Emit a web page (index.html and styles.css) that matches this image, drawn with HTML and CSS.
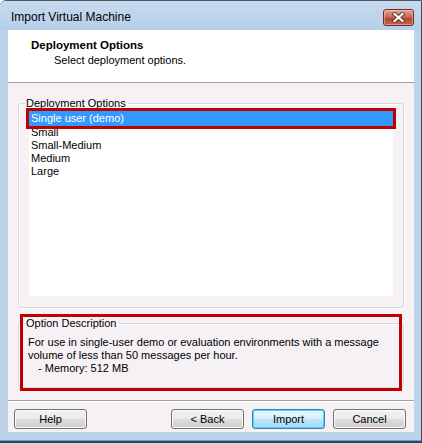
FILE: index.html
```html
<!DOCTYPE html>
<html lang="en">
<head>
    <meta charset="UTF-8">
    <meta name="viewport" content="width=device-width, initial-scale=1.0">
    <title>Import Virtual Machine</title>
    <link rel="stylesheet" href="styles.css">
</head>
<body>
    <div class="window">
        <div class="titlebar">
            <span class="title">Import Virtual Machine</span>
            <button class="close" aria-label="Close">
                <svg width="15" height="11" viewBox="0 0 15 11">
                    <path d="M3.5 2 L11.5 9 M11.5 2 L3.5 9" stroke="#5a3a36" stroke-width="4" stroke-linecap="square"/>
                    <path d="M3.5 2 L11.5 9 M11.5 2 L3.5 9" stroke="#fff" stroke-width="2.2" stroke-linecap="square"/>
                </svg>
            </button>
        </div>

        <div class="client">
            <div class="header">
                <div class="header-title">Deployment Options</div>
                <div class="header-sub">Select deployment options.</div>
            </div>

            <div class="content">
                <fieldset class="group options">
                    <legend>Deployment Options</legend>
                    <ul class="listbox">
                        <li class="selected">Single user (demo)</li>
                        <li>Small</li>
                        <li>Small-Medium</li>
                        <li>Medium</li>
                        <li>Large</li>
                    </ul>
                </fieldset>

                <div class="desc-wrap">
                    <fieldset class="group desc">
                        <legend>Option Description</legend>
                        <div class="desc-text">
                            <p>For use in single-user demo or evaluation environments with a message volume of less than 50 messages per hour.</p>
                            <p class="indent">- Memory: 512 MB</p>
                        </div>
                    </fieldset>
                    <div class="callout"></div>
                </div>
            </div>

            <div class="footer">
                <button class="btn">Help</button>
                <div class="spacer"></div>
                <button class="btn">&lt; Back</button>
                <button class="btn default">Import</button>
                <button class="btn">Cancel</button>
            </div>
        </div>
        <div class="frame-bottom"></div>
    </div>
</body>
</html>
```

FILE: styles.css
```css
body {
    margin: 0;
    font-family: "Liberation Sans", Arial, sans-serif;
    font-size: 11px;
    color: #000;
    background: #fff;
}
.window {
    width: 422px;
    height: 443px;
    box-sizing: border-box;
    background: #bcd3ea;
    border-top: 1px solid #4a5866;
    border-right: 1px solid #3d4c5c;
    border-top-left-radius: 6px;
    display: flex;
    flex-direction: column;
    overflow: hidden;
}
.titlebar {
    height: 29px;
    display: flex;
    align-items: center;
    background: linear-gradient(#c7dbef, #b5cee9);
    padding-left: 11px;
}
.title {
    font-size: 12px;
    color: #000;
    padding-top: 2px;
    flex: 1;
}
.close {
    width: 31px;
    height: 17px;
    margin: 3px 7px 0 0;
    padding: 0;
    border: 1px solid #6d2a23;
    border-radius: 3px;
    background: linear-gradient(#e4a394, #c9604d 50%, #b8412c 51%, #c9634f);
    box-shadow: inset 0 0 0 1px rgba(255, 255, 255, 0.35);
    display: flex;
    align-items: center;
    justify-content: center;
}
.client {
    margin: 0 7px 0 8px;
    height: 402px;
    background: #f5f1f5;
    display: flex;
    flex-direction: column;
}
.header {
    height: 53px;
    background: #fff;
    border-bottom: 1px solid #a0a0a0;
    box-sizing: border-box;
    padding: 9px 0 0 23px;
}
.header-title {
    font-weight: bold;
    font-size: 11.5px;
}
.header-sub {
    margin: 3px 0 0 23px;
}
.content {
    padding: 14px 10px 0 10px;
    flex: 1;
}
.group {
    margin: 0;
    border: 1px solid #d6d8de;
    border-radius: 3px;
    padding: 0;
    box-shadow: inset 1px 1px 0 #fff, 1px 1px 0 #fff;
}
.group legend {
    padding: 0 2px 0 1px;
    margin-left: 6px;
    line-height: 13px;
}
.options {
    height: 211px;
    box-sizing: border-box;
}
.listbox {
    list-style: none;
    margin: 1px 10px 0 10px;
    padding: 0;
    background: #fff;
    height: 185px;
}
.listbox li {
    height: 13px;
    line-height: 13px;
    padding-left: 2px;
}
.listbox li.selected {
    background: #3399ff;
    color: #fff;
    height: 15px;
    line-height: 15px;
    outline: 3px solid #c00000;
    outline-offset: 0;
}
.desc-wrap {
    position: relative;
    margin-top: 9px;
}
.desc {
    height: 71px;
    box-sizing: border-box;
}
.desc-text {
    padding: 6px 9px 0 9px;
}
.desc p {
    margin: 0;
    line-height: 13px;
}
.desc .indent {
    padding-left: 10px;
}
.callout {
    position: absolute;
    left: 2px;
    right: 2px;
    top: -3px;
    bottom: -3px;
    border: 3px solid #c00000;
}
.footer {
    border-top: 1px solid #a0a0a0;
    box-shadow: inset 0 1px 0 #fff;
    height: 32px;
    box-sizing: border-box;
    display: flex;
    align-items: flex-start;
    gap: 8px;
    padding: 8px 8px 0 6px;
}
.spacer {
    flex: 1;
}
.btn {
    width: 73px;
    height: 20px;
    font-family: "Liberation Sans", Arial, sans-serif;
    font-size: 11px;
    color: #000;
    border: 1px solid #707070;
    border-radius: 3px;
    background: linear-gradient(#f2f2f2 0%, #ebebeb 50%, #dddddd 51%, #cfcfcf 100%);
    box-shadow: inset 0 0 0 1px #fcfcfc;
    padding: 0;
}
.btn.default {
    border-color: #3c7fb1;
    background: linear-gradient(#eaf6fd 0%, #d9f0fc 50%, #bee6fd 51%, #a7d9f5 100%);
    box-shadow: inset 0 0 0 1px #48d8fb;
}
.frame-bottom {
    flex: 1;
    border-bottom: 2px solid #1d4f66;
    box-shadow: inset 0 -1px 0 #5fa6c4;
}
```
